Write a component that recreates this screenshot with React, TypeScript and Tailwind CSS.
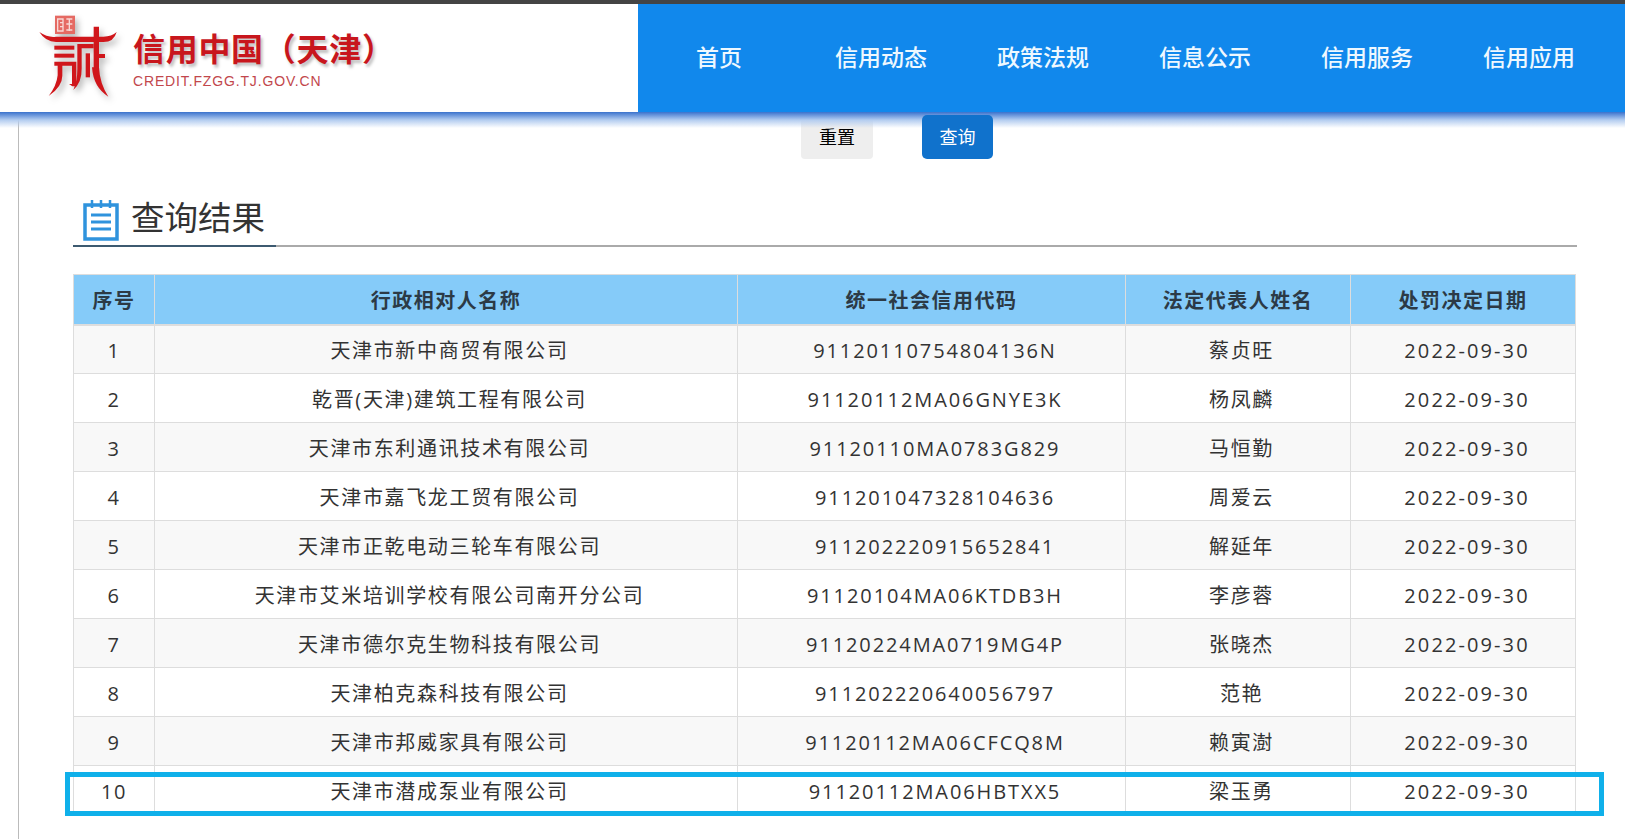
import React from "react";

const FONT = "font-['Open_Sans','Noto_Sans_CJK_SC',sans-serif]";

const rows: [string, string, string, string][] = [
  ["天津市新中商贸有限公司", "91120110754804136N", "蔡贞旺", "2022-09-30"],
  ["乾晋(天津)建筑工程有限公司", "91120112MA06GNYE3K", "杨凤麟", "2022-09-30"],
  ["天津市东利通讯技术有限公司", "91120110MA0783G829", "马恒勤", "2022-09-30"],
  ["天津市嘉飞龙工贸有限公司", "911201047328104636", "周爱云", "2022-09-30"],
  ["天津市正乾电动三轮车有限公司", "911202220915652841", "解延年", "2022-09-30"],
  ["天津市艾米培训学校有限公司南开分公司", "91120104MA06KTDB3H", "李彦蓉", "2022-09-30"],
  ["天津市德尔克生物科技有限公司", "91120224MA0719MG4P", "张晓杰", "2022-09-30"],
  ["天津柏克森科技有限公司", "911202220640056797", "范艳", "2022-09-30"],
  ["天津市邦威家具有限公司", "91120112MA06CFCQ8M", "赖寅澍", "2022-09-30"],
  ["天津市潜成泵业有限公司", "91120112MA06HBTXX5", "梁玉勇", "2022-09-30"],
];

const nav = ["首页", "信用动态", "政策法规", "信息公示", "信用服务", "信用应用"];
const heads = ["序号", "行政相对人名称", "统一社会信用代码", "法定代表人姓名", "处罚决定日期"];

function Logo() {
  return (
    <svg viewBox="0 0 330 330" className="w-[110px] h-[110px] shrink-0 drop-shadow-[3px_4px_3px_rgba(0,0,0,0.28)]">
      <rect x="105" y="35" width="60" height="55" fill="#e56a63" />
      <path d="M113 45h16v36h-16zM139 45h18M148 45v36M139 60h18M139 78h18M120 56h9M120 68h9" stroke="#f8d9d6" strokeWidth="4" fill="none" />
      <g fill="#d0161b">
        <path d="M58 84Q85 102 108 98L250 98Q275 98 290 84Q282 114 250 114L108 114Q76 113 58 84Z" />
        <path d="M221 68h16v122Q239 238 265 278Q220 250 216 190L221 190Z" />
        <rect x="103" y="125" width="60" height="12" />
        <rect x="103" y="149" width="60" height="12" />
        <path d="M103 173h66v74h-12l-10-7h9v-55H127v30Q127 248 86 276Q110 245 113 214V185h-10Z" />
        <path d="M172 120h49v13h-36v60Q186 235 160 258Q172 232 172 195Z" />
        <path d="M197 148h13v72h-13z" />
        <path d="M237 150h18v12h-18z" />
      </g>
    </svg>
  );
}

function NoteIcon() {
  return (
    <svg viewBox="0 0 36 42" className="w-[36px] h-[42px] shrink-0" fill="none" stroke="#2f93dd">
      <path d="M2 6H34V40H2Z" strokeWidth="3.5" />
      <path d="M9 1V9M18 1V9M27 1V9" strokeWidth="2.5" />
      <path d="M8 16H28M8 23H28M8 30H28" strokeWidth="3" />
    </svg>
  );
}

export default function App() {
  return (
    <div className={`${FONT} relative h-[839px] w-[1625px] overflow-hidden bg-white`}>
      <div className="h-1 bg-[#444444]" />
      <header className="flex h-[108px]">
        <div className="flex w-[638px] items-start bg-white pl-[20px]">
          <Logo />
          <div className="ml-[3px] mt-[25px] flex flex-col">
            <span className="whitespace-nowrap text-[32px] leading-[40px] font-bold tracking-[0.7px] text-[#c8161d] [text-shadow:2px_3px_3px_rgba(0,0,0,0.25)]">
              信用中国（天津）
            </span>
            <span className="mt-[4px] font-['Liberation_Sans',sans-serif] text-[14px] leading-[16px] tracking-[0.85px] text-[#c2474c]">
              CREDIT.FZGG.TJ.GOV.CN
            </span>
          </div>
        </div>
        <nav className="flex flex-1 items-center bg-[#1188ec] pr-[15px] pb-[1px]">
          {nav.map((n) => (
            <a key={n} className="flex-1 text-center text-[23px] font-medium text-[#eef8ff]">
              {n}
            </a>
          ))}
        </nav>
      </header>
      <div className="absolute left-0 right-0 top-[112px] z-10 h-[16px] bg-gradient-to-b from-[#3a72cc] via-[#b4cdf0] to-transparent" />

      <main className="ml-[18px] h-[727px] border-l border-[#bbbbbb] pl-[54px]">
        <div className="flex h-[46px] gap-[49px] pl-[728px]">
          <button className="mt-[3px] flex h-[44px] w-[72px] items-center justify-center rounded-[4px] bg-[#eeeeee] text-[18px] text-black">
            重置
          </button>
          <button className="relative z-20 mt-[3px] flex h-[44px] w-[71px] items-center justify-center rounded-[5px] bg-[#1072cc] text-[18px] text-white">
            查询
          </button>
        </div>

        <div className="mt-[41px] w-[1504px] border-b-2 border-[#aaaaaa]">
          <div className="-mb-[2px] flex h-[48px] w-[203px] items-start gap-[12px] border-b-2 border-[#3d5a70] pl-[10px]">
            <NoteIcon />
            <span className="-mt-[5px] whitespace-nowrap text-[33.5px] leading-[46px] text-[#333333]">查询结果</span>
          </div>
        </div>

        <div className="relative mt-[27px] w-[1502px]">
          <table className="w-full table-fixed border-collapse text-center text-[20px] text-[#333333]">
            <colgroup>
              <col className="w-[81px]" />
              <col className="w-[583px]" />
              <col className="w-[388px]" />
              <col className="w-[225px]" />
              <col className="w-[225px]" />
            </colgroup>
            <thead>
              <tr className="h-[50px] bg-[#85cbf9]">
                {heads.map((h) => (
                  <th key={h} className="border border-b-2 border-[#dddddd] p-0 pt-[3px] font-bold tracking-[1.5px] text-[#2c3a46]">
                    {h}
                  </th>
                ))}
              </tr>
            </thead>
            <tbody>
              {rows.map((r, i) => (
                <tr key={r[1]} className={`h-[49px] ${i % 2 === 0 ? "bg-[#f8f8f8]" : "bg-white"}`}>
                  <td className="border border-[#dddddd] p-0 pt-[3px] tracking-[1.5px]">{i + 1}</td>
                  <td className="border border-[#dddddd] p-0 pl-[7px] pt-[3px] tracking-[1.65px]">{r[0]}</td>
                  <td className="border border-[#dddddd] p-0 pl-[7px] pt-[3px] tracking-[1.9px]">{r[1]}</td>
                  <td className="border border-[#dddddd] p-0 pl-[7px] pt-[3px] tracking-[1.6px]">{r[2]}</td>
                  <td className="border border-[#dddddd] p-0 pl-[8px] pt-[3px] tracking-[2.1px]">{r[3]}</td>
                </tr>
              ))}
            </tbody>
          </table>
          <div className="absolute -left-[8px] top-[498px] h-[44px] w-[1539px] border-[5px] border-[#0fb0ea]" />
        </div>
      </main>
    </div>
  );
}
